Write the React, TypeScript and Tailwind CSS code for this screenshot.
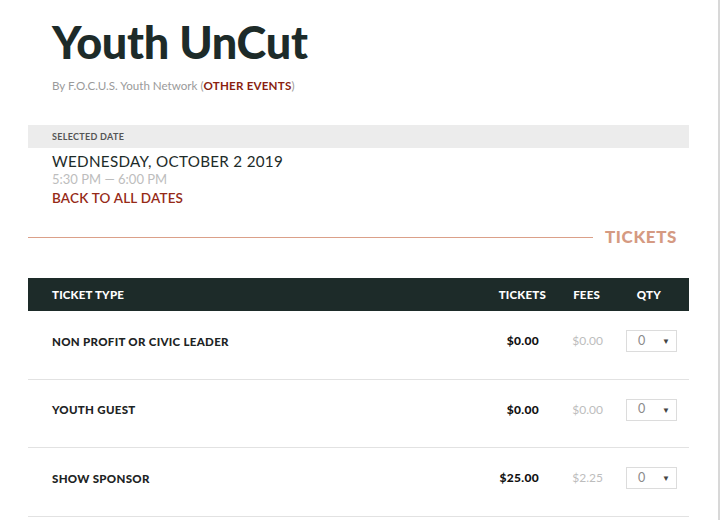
import React from "react";

const rows = [
  { name: "NON PROFIT OR CIVIC LEADER", price: "$0.00", fee: "$0.00" },
  { name: "YOUTH GUEST", price: "$0.00", fee: "$0.00" },
  { name: "SHOW SPONSOR", price: "$25.00", fee: "$2.25" },
];

export default function App() {
  return (
    <div
      className="w-[720px] h-[520px] overflow-hidden bg-white border-r-2 border-[#d8d8d8]"
      style={{ fontFamily: "Lato, 'Noto Sans', sans-serif" }}
    >
      <div className="w-[661px] ml-[28px]">
        <h1 className="pl-[24px] pt-[16px] text-[45px] leading-[52px] font-black text-[#1d2b29] tracking-[-0.3px]">
          Youth UnCut
        </h1>
        <div className="pl-[24px] mt-[10px] text-[11.6px] leading-[16px] text-[#9a9a9a]">
          By F.O.C.U.S. Youth Network (
          <span className="text-[#8a1f10] font-bold tracking-[0.2px]">OTHER EVENTS</span>)
        </div>

        <div className="mt-[31px] h-[23px] bg-[#ececec] pl-[24px] flex items-center text-[9px] font-bold text-[#555] tracking-[0.3px]">
          SELECTED DATE
        </div>
        <div className="pl-[24px] pt-[4px]">
          <div className="text-[15.2px] leading-[19px] text-[#1d2b29] tracking-[0.3px]">
            WEDNESDAY, OCTOBER 2 2019
          </div>
          <div className="text-[13px] leading-[16px] text-[#bdbdbd]">5:30 PM — 6:00 PM</div>
          <div className="mt-[2px] text-[13.5px] leading-[18px] text-[#962a17] font-semibold tracking-[0.2px]">
            BACK TO ALL DATES
          </div>
        </div>

        <div className="mt-[19px] flex items-center">
          <div className="flex-1 h-px bg-[#dba089]" />
          <div className="pl-[12px] pr-[12px] text-[17px] font-black text-[#d59a82] tracking-[0.6px] leading-[22px]">
            TICKETS
          </div>
        </div>

        <div className="mt-[30px] h-[33px] bg-[#1d2b29] flex items-center text-white text-[11.5px] font-black tracking-[0.2px]">
          <div className="flex-1 pl-[24px]">TICKET TYPE</div>
          <div className="w-[100px] text-right">TICKETS</div>
          <div className="w-[54px] text-right">FEES</div>
          <div className="w-[61px] text-right">QTY</div>
          <div className="w-[28px]" />
        </div>

        {rows.map((r) => (
          <div key={r.name} className="h-[68.5px] pb-[7px] border-b border-[#e2e2e2] flex items-center">
            <div className="flex-1 pl-[24px] text-[11.5px] font-black text-[#1d2424] tracking-[0.3px]">
              {r.name}
            </div>
            <div className="w-[93px] text-right text-[12px] font-black text-[#111] tracking-[0.3px]">
              {r.price}
            </div>
            <div className="w-[64px] text-right text-[12px] text-[#bdbdbd]">{r.fee}</div>
            <div className="w-[86px] pl-[23px]">
              <div className="w-[51px] h-[22px] border border-[#dcdcdc] flex items-center justify-between pl-[11px] pr-[6px]">
                <span className="text-[12.5px] text-[#8a8a8a]">0</span>
                <span className="text-[8px] text-[#444]">▼</span>
              </div>
            </div>
          </div>
        ))}
      </div>
    </div>
  );
}
